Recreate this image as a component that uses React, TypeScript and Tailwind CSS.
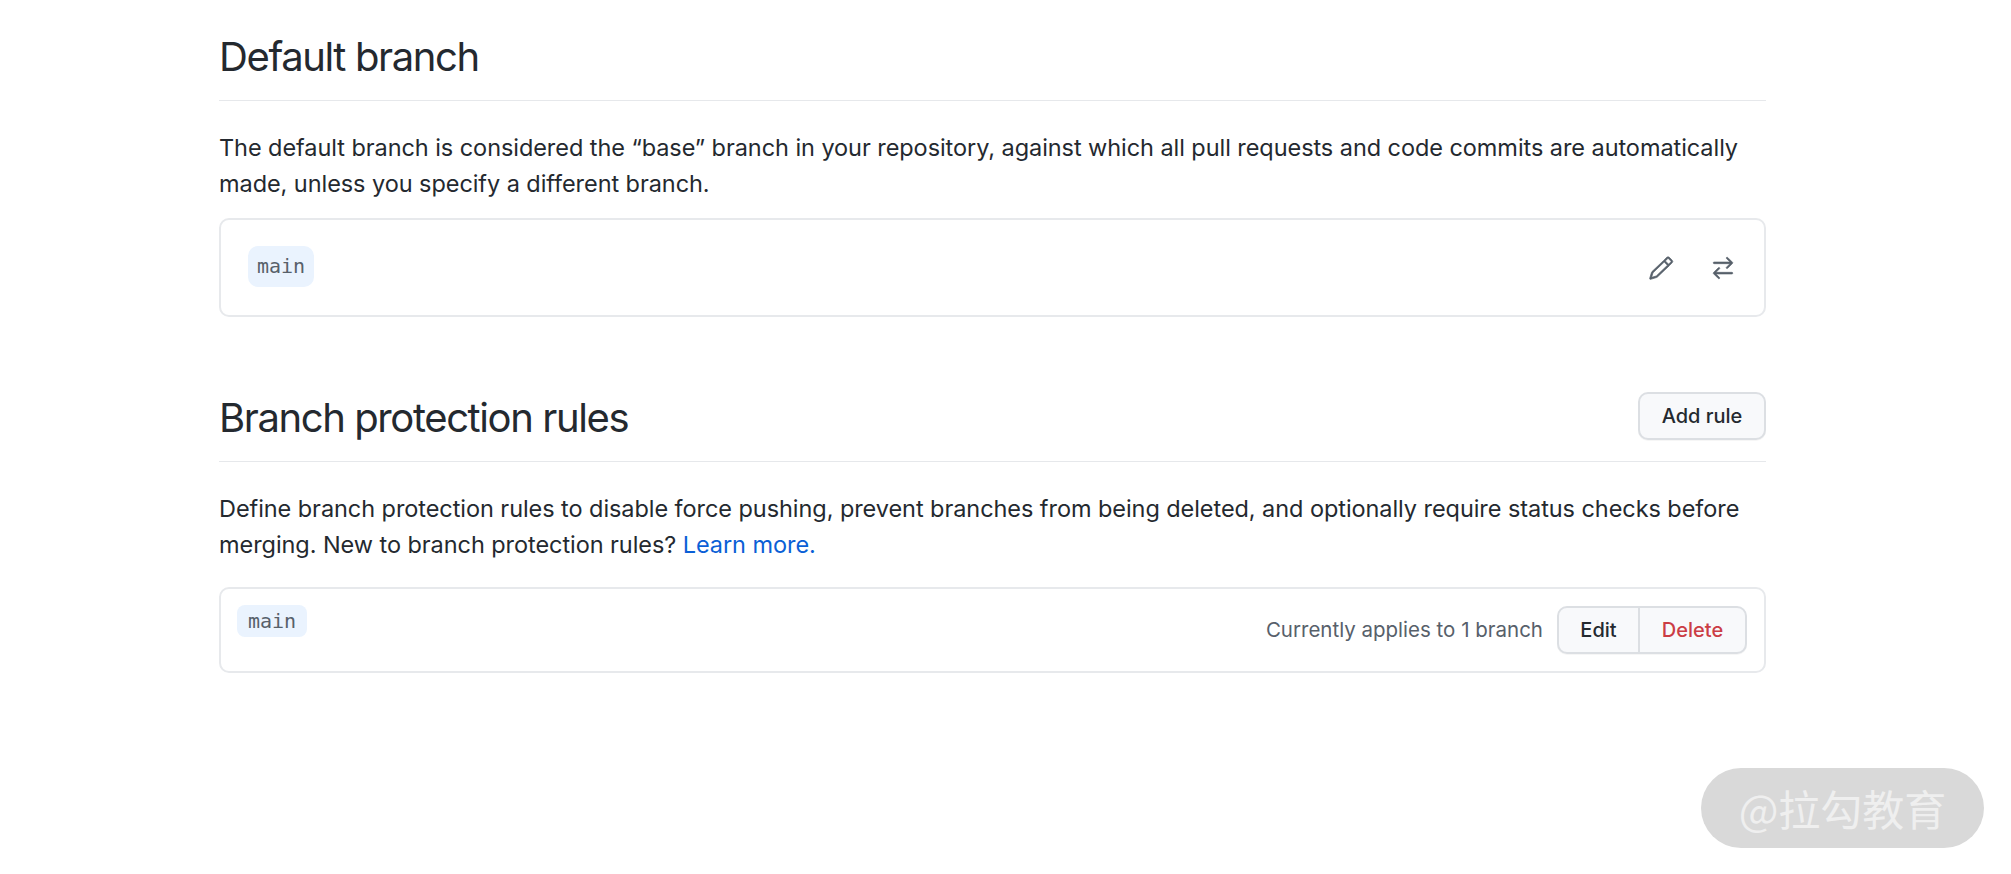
import {GoPencil, GoArrowSwitch} from "react-icons/go";

function Pill({className}: {className: string}) {
    return (
        <code className={`inline-block bg-[#eaf3fe] text-[#57606a] text-[20px] font-['DejaVu_Sans_Mono',monospace] ${className}`}>
            main
        </code>
    );
}

function SectionHeader({title, action}: {title: string; action?: React.ReactNode}) {
    return (
        <div className="flex items-center justify-between h-[101px] border-b border-[#e6e8eb] pt-[13px]">
            <h2 className="text-[40px] leading-[50px] tracking-[-1.4px] text-[#24292f] font-normal">{title}</h2>
            {action}
        </div>
    );
}

export default function App() {
    return (
        <div className="relative h-[874px] w-[2011px] overflow-hidden bg-white font-['Inter',sans-serif] text-[#24292f]">
            <main className="ml-[219px] w-[1547px]">
                <section>
                    <SectionHeader title="Default branch"/>
                    <p className="mt-[29px] text-[23.5px] leading-[36px] tracking-[-0.065px]">
                        The default branch is considered the “base” branch in your repository, against which all pull requests and code commits are automatically made, unless you specify a different branch.
                    </p>
                    <div className="mt-[16px] flex h-[99px] items-center justify-between rounded-[10px] border-2 border-[#e7e9ec] pl-[27px] pr-[28px]">
                        <Pill className="rounded-[10px] px-[9px] py-[5px] leading-[31px] -mt-[2px]"/>
                        <div className="flex items-center gap-[36px] mt-[1px] text-[#57606a]">
                            <GoPencil size={26} stroke="currentColor" strokeWidth={0.6}/>
                            <GoArrowSwitch size={26} stroke="currentColor" strokeWidth={0.6}/>
                        </div>
                    </div>
                </section>

                <section className="mt-[44px]">
                    <SectionHeader
                        title="Branch protection rules"
                        action={
                            <button className="h-[48px] w-[128px] -mt-[4px] rounded-[10px] border-2 border-[#dcdfe3] bg-[#f8f9fb] text-[20px] font-medium text-[#24292f] shadow-[0_1px_0_rgba(27,31,36,0.04)]">
                                Add rule
                            </button>
                        }
                    />
                    <p className="mt-[29px] text-[23.5px] leading-[36px] tracking-[-0.065px]">
                        Define branch protection rules to disable force pushing, prevent branches from being deleted, and optionally require status checks before merging. New to branch protection rules? <a className="text-[#0b5fd6]">Learn more.</a>
                    </p>
                    <div className="mt-[24px] flex h-[86px] items-start justify-between rounded-[10px] border-2 border-[#e7e9ec] pl-[16px] pr-[17px] pt-[16px]">
                        <Pill className="rounded-[8px] px-[11px] leading-[32px]"/>
                        <div className="flex items-center gap-[14px] mt-[1px]">
                            <span className="text-[20.5px] text-[#57606a]">Currently applies to 1 branch</span>
                            <div className="flex h-[48px] w-[190px] rounded-[10px] border-2 border-[#dcdfe3] bg-[#f8f9fb] text-[20px] font-medium shadow-[0_1px_0_rgba(27,31,36,0.04)]">
                                <button className="w-[81px] border-r-2 border-[#dcdfe3] text-[#24292f]">Edit</button>
                                <button className="flex-1 text-[#cb3d45]">Delete</button>
                            </div>
                        </div>
                    </div>
                </section>
            </main>

            <div className="absolute left-[1701px] top-[768px] flex h-[80px] w-[283px] items-center justify-center rounded-[40px] bg-[#d9d9d9] pb-[2px] text-[42px] text-[#efefef] font-['Noto_Sans_CJK_SC',sans-serif]">
                @拉勾教育
            </div>
        </div>
    );
}
